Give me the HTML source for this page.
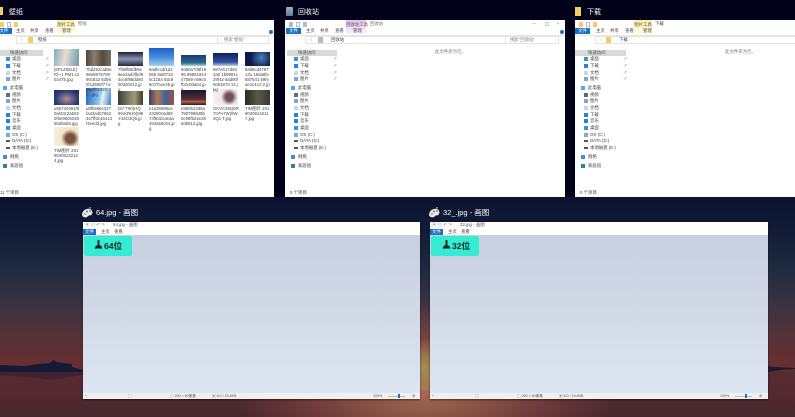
<!DOCTYPE html>
<html><head><meta charset="utf-8"><style>
html,body{margin:0;padding:0}
body{width:795px;height:417px;overflow:hidden;position:relative;font-family:"Liberation Sans","Noto Sans CJK SC",sans-serif;background:#02031a}
div,span{position:absolute;white-space:nowrap}
#r{left:0;top:0;width:795px;height:417px;overflow:hidden;filter:blur(.3px)}
#bg{left:0;top:197px;width:795px;height:220px;background:linear-gradient(#0a1430 0,#121c38 35px,#1f2a3f 70px,#383340 105px,#523238 135px,#6a2f32 170px,#562b30 176px,#54292f 195px,#48282f 220px)}
#g1{left:120px;top:290px;width:620px;height:127px;background:radial-gradient(ellipse 190px 90px at 305px 100px,rgba(180,120,85,.85),rgba(150,80,70,.5) 60%,rgba(120,50,50,0) 100%)}
#g2{left:410px;top:330px;width:30px;height:60px;background:radial-gradient(ellipse 14px 30px at 15px 38px,rgba(170,170,90,.7),rgba(170,170,90,0))}
.lbl{color:#fff;font-size:7px;line-height:9px;top:8px}
.w{top:20px;height:177px;background:#fff;overflow:hidden}
.t{font-size:4.4px;line-height:6px;color:#444}
.ctx{top:0;height:14px;width:18px;font-size:4.4px;line-height:9px;text-align:center;color:#555}
.file{top:8px;left:0;height:6px;background:#1a70c0;color:#fff;font-size:4.4px;line-height:6px;text-align:center}
.bar{left:0;right:0;top:15px;height:1px;background:#e6e6e6}
.addr{top:16px;height:6px;border:1px solid #e4e4e4}
.ri{width:4px;height:4px}
.q{left:0;top:30px;height:6px;background:#d9d9d9}
.sb{left:0;top:0;width:60px;height:177px}
.sb div.t{left:14px}
.pin{font-size:4px;line-height:6px;color:#777}
.e{font-size:4.4px;line-height:6px;color:#777}
.th{width:25px}
.c{width:26px;font-size:4.3px;line-height:5px;color:#444;white-space:normal;word-break:break-all}
.pw{top:222px;height:177px;background:#fff;overflow:hidden;box-shadow:0 1px 2px rgba(0,0,0,.5)}
.cv{left:0;right:0;top:13px;height:158px;background:linear-gradient(#c8d0df,#d4dcea 60%,#dce5f1)}
.st{left:0;right:0;top:171px;height:6px;background:#f0f0f0;font-size:3.6px;line-height:6px;color:#555}
.cy{left:1px;top:14px;width:48px;height:20px;background:#35ecd2;border-radius:2px}
.big{font-size:8.6px;font-weight:bold;color:#0a2a2a;line-height:11px;top:4px}
.pal{top:207px}
</style></head><body><div id="r">
<div id="bg"></div><div id="g1"></div><div id="g2"></div>
<svg style="position:absolute;left:0;top:355px" width="795" height="30"><path d="M0 10L25 11L32 10L38 9L50 8L53 5L57 7L62 8L72 9V12L83 15V17H0Z" fill="#151a35"/><path d="M0 17H83V20L50 25L38 23L0 20Z" fill="#3a2030" opacity=".7"/><path d="M768 11L775 12L795 13V14L780 15L768 17Z" fill="#1b1c33"/></svg>

<div style="left:0;top:7px;width:3px;height:8px;background:#f1cd63"></div>
<div class="lbl" style="left:9px">壁纸</div>
<div style="left:286px;top:7px;width:7px;height:9px;background:linear-gradient(#9fb3c4,#5d7e9a);border-radius:1px"></div>
<div class="lbl" style="left:298px">回收站</div>
<div style="left:575px;top:7px;width:6px;height:9px;background:#f1cd63"></div>
<div class="lbl" style="left:587px">下载</div>

<!-- window 1 -->
<div class="w" style="left:-4px;width:278px">
 <div style="left:4px;top:2px;width:4px;height:5px;background:#f1cd63"></div><div style="left:11px;top:2px;width:4px;height:5px;border:1px solid #bbb;box-sizing:border-box"></div><div style="left:18px;top:2px;width:4px;height:5px;background:#f1cd63"></div>
 <div class="ctx" style="left:61px;background:linear-gradient(#fdf0a0,#fffbe6);width:18px">图片工具</div>
 <div class="t" style="left:82px;top:1px;color:#777">壁纸</div>
 <div class="file" style="left:0;width:16px">文件</div>
 <div class="t" style="left:20px;top:8px">主页</div><div class="t" style="left:34px;top:8px">共享</div><div class="t" style="left:49px;top:8px">查看</div><div class="t" style="left:66px;top:8px">管理</div>
 <div class="bar"></div>
 <div class="t" style="left:24px;top:17px;color:#777">↑</div><div style="left:32px;top:17px;width:5px;height:6px;background:#f1cd63"></div><div class="t" style="left:42px;top:17px">壁纸</div>
 <div class="addr" style="left:20px;width:218px"></div><div class="addr" style="left:221px;width:50px"></div>
 <div class="t" style="left:228px;top:17px;color:#888">搜索"壁纸"</div>
 <div style="left:273px;top:10px;width:4px;height:4px;border-radius:50%;background:#1a70c0"></div>
 <div class="q" style="width:47px"></div>
 <div class="sb">
 <div class="t" style="top:30px">快速访问</div><div class="t" style="left:16px;top:36px">桌面</div><div class="t" style="left:16px;top:43px">下载</div><div class="t" style="left:16px;top:50px">文档</div><div class="t" style="left:16px;top:56px">图片</div>
 <div class="t" style="top:65px">此电脑</div><div class="t" style="left:16px;top:72px">视频</div><div class="t" style="left:16px;top:78px">图片</div><div class="t" style="left:16px;top:85px">文档</div><div class="t" style="left:16px;top:92px">下载</div><div class="t" style="left:16px;top:98px">音乐</div><div class="t" style="left:16px;top:105px">桌面</div><div class="t" style="left:16px;top:112px">OS (C:)</div><div class="t" style="left:16px;top:118px">DATA (D:)</div><div class="t" style="left:16px;top:125px">本地磁盘 (E:)</div>
 <div class="t" style="top:134px">网络</div><div class="t" style="top:143px">家庭组</div>
 <div class="ri" style="left:10px;top:37px;background:#2f9ad8"></div><div class="ri" style="left:10px;top:44px;background:#2f7fd8"></div><div class="ri" style="left:10px;top:51px;background:#c9d6e4"></div><div class="ri" style="left:10px;top:57px;background:#7aa8d0"></div>
 <div class="ri" style="left:7px;top:66px;background:#55a9e0"></div><div class="ri" style="left:10px;top:73px;background:#606a78"></div><div class="ri" style="left:10px;top:79px;background:#7aa8d0"></div><div class="ri" style="left:10px;top:86px;background:#c9d6e4"></div><div class="ri" style="left:10px;top:93px;background:#2f7fd8"></div><div class="ri" style="left:10px;top:99px;background:#2f7fd8"></div><div class="ri" style="left:10px;top:106px;background:#2f9ad8"></div><div class="ri" style="left:10px;top:113px;background:#8aa"></div><div class="ri" style="left:10px;top:120px;height:2px;background:#555"></div><div class="ri" style="left:10px;top:127px;height:2px;background:#555"></div><div class="ri" style="left:7px;top:135px;background:#3f8fd0"></div><div class="ri" style="left:7px;top:144px;background:#2a8a8a"></div>
 <div class="pin" style="left:49px;top:36px">↗</div><div class="pin" style="left:49px;top:43px">↗</div><div class="pin" style="left:49px;top:50px">↗</div><div class="pin" style="left:49px;top:56px">↗</div>
 </div>
 <div class="t" style="left:4px;top:170px">11 个项目</div>
</div>
<!-- thumbs -->
<div class="th" style="left:54px;top:49px;height:17px;background:linear-gradient(100deg,#7fb0b8,#e8dcd8 45%,#6a9aa8)"></div>
<div class="th" style="left:86px;top:50px;height:16px;background:linear-gradient(90deg,#4d4438,#8a7e6c,#544a40,#7a7060)"></div>
<div class="th" style="left:118px;top:52px;height:14px;background:linear-gradient(#1a2038,#8a96b0 50%,#20283f)"></div>
<div class="th" style="left:149px;top:48px;height:18px;background:linear-gradient(#1d5fc8,#4a92e0 55%,#a8d0f0)"></div>
<div class="th" style="left:181px;top:55px;height:11px;background:linear-gradient(#1a3a70,#2a6a90 70%,#a8d8d0)"></div>
<div class="th" style="left:213px;top:53px;height:13px;background:linear-gradient(#0e1e5a,#3050a0 70%,#c0d0e0)"></div>
<div class="th" style="left:245px;top:52px;height:14px;background:radial-gradient(circle at 65% 40%,#4a80c0,#0c1a4a 60%)"></div>
<div class="th" style="left:54px;top:90px;height:15px;background:radial-gradient(ellipse at 50% 60%,#b89090,#30407a 60%,#1a2450)"></div>
<div class="th" style="left:86px;top:88px;height:17px;background:linear-gradient(100deg,#2060c0,#90c8f0 55%,#e8f2f8 65%,#3a80c8)"></div>
<div class="th" style="left:118px;top:91px;height:14px;background:linear-gradient(90deg,#3a3a30,#707060,#a09a78,#3c3c34)"></div>
<div class="th" style="left:149px;top:90px;height:15px;background:linear-gradient(90deg,#30407a,#b07a50,#4060a0,#a05040)"></div>
<div class="th" style="left:181px;top:90px;height:15px;background:linear-gradient(#12182f,#5a3038 65%,#c06040 75%,#2a1c2a)"></div>
<div class="th" style="left:213px;top:89px;height:16px;background:radial-gradient(circle at 65% 50%,#6a5060 20%,#f0e6e6 45%,#f6f4f4)"></div>
<div class="th" style="left:245px;top:90px;height:15px;background:linear-gradient(90deg,#2a2a22,#5a5a48,#3a3830)"></div>
<div class="th" style="left:54px;top:127px;height:19px;background:radial-gradient(circle at 65% 60%,#7a5040 22%,#f3e4c8 45%,#f6f2ea)"></div>
<div class="c" style="left:54px;top:67px">{6PLZ59LE}R}~1 PM1.1202475.jpg</div>
<div class="c" style="left:86px;top:67px">7bd292cab9c98e897870890c822 5d980f1d590f7 hzpxjdf01020e...jpg</div>
<div class="c" style="left:118px;top:67px">7fb9fb8db9e9ee2ad4fbd94ec8f95dd9000330012.jpg</div>
<div class="c" style="left:149px;top:67px">9adfecdf1d2555 8a5f7330c1184 93c98c07bce25.jpg</div>
<div class="c" style="left:181px;top:67px">9a60a708f1996 8985194447569 e59c5fb2c0da54.jpg</div>
<div class="c" style="left:213px;top:67px">587e617d932a0 1b9991c29f42 6ad90f50b1870 13.jpg</div>
<div class="c" style="left:245px;top:67px">84d6cd4787131 15da8fe587541 59feae1e1c3 2.jpg</div>
<div class="c" style="left:54px;top:106px">u85720491f90af43c2a5620f5e95c504855d0a69.jpg</div>
<div class="c" style="left:86px;top:106px">u8fb566c027fa43a4b7562347ffdc45413f4eed3.jpg</div>
<div class="c" style="left:118px;top:106px">DV`T90{HQ9%KRH0(M9Y44O3Q5.jpg</div>
<div class="c" style="left:149px;top:106px">e1a39980ee43280c6d5974f832cdeaa453a59cb4.jpg</div>
<div class="c" style="left:181px;top:106px">e960523d5a790798948b0c95f521e285d6812.jpg</div>
<div class="c" style="left:213px;top:106px">GKVC35Q6R7IV%7W)8W3Q1 T.jpg</div>
<div class="c" style="left:245px;top:106px">TIM图片 20190408142117.jpg</div>
<div class="c" style="left:54px;top:148px">TIM图片 20190408132124.jpg</div>

<!-- window 2 -->
<div class="w" style="left:285px;width:280px">
 <div style="left:4px;top:2px;width:4px;height:5px;background:#a9bfd4"></div><div style="left:11px;top:2px;width:4px;height:5px;border:1px solid #bbb;box-sizing:border-box"></div><div style="left:18px;top:2px;width:4px;height:5px;background:#a9bfd4"></div>
 <div class="ctx" style="left:61px;background:linear-gradient(#e6bff0,#fbf2fd);width:20px">回收站工具</div>
 <div class="t" style="left:85px;top:1px;color:#777">回收站</div>
 <div class="t" style="left:247px;top:1px;color:#888">—</div><div style="left:260px;top:2px;width:4px;height:4px;border:1px solid #ccc;box-sizing:border-box"></div><div class="t" style="left:272px;top:1px;color:#888">×</div>
 <div class="file" style="left:1px;width:15px">文件</div>
 <div class="t" style="left:21px;top:8px">主页</div><div class="t" style="left:35px;top:8px">共享</div><div class="t" style="left:50px;top:8px">查看</div><div class="t" style="left:68px;top:8px">管理</div>
 <div class="bar"></div>
 <div class="t" style="left:25px;top:17px;color:#777">↑</div><div style="left:33px;top:17px;width:5px;height:6px;background:#a9bfd4"></div><div class="t" style="left:46px;top:17px">回收站</div>
 <div class="addr" style="left:20px;width:208px"></div><div class="addr" style="left:220px;width:52px"></div>
 <div class="t" style="left:225px;top:17px;color:#888">搜索"回收站"</div>
 <div style="left:275px;top:10px;width:4px;height:4px;border-radius:50%;background:#1a70c0"></div>
 <div class="q" style="left:2px;width:50px"></div>
 <div class="sb" style="left:5px">
 <div class="t" style="left:8px;top:30px">快速访问</div><div class="t" style="left:10px;top:36px">桌面</div><div class="t" style="left:10px;top:43px">下载</div><div class="t" style="left:10px;top:50px">文档</div><div class="t" style="left:10px;top:56px">图片</div>
 <div class="t" style="left:8px;top:65px">此电脑</div><div class="t" style="left:10px;top:72px">视频</div><div class="t" style="left:10px;top:78px">图片</div><div class="t" style="left:10px;top:85px">文档</div><div class="t" style="left:10px;top:92px">下载</div><div class="t" style="left:10px;top:98px">音乐</div><div class="t" style="left:10px;top:105px">桌面</div><div class="t" style="left:10px;top:112px">OS (C:)</div><div class="t" style="left:10px;top:118px">DATA (D:)</div><div class="t" style="left:10px;top:125px">本地磁盘 (E:)</div>
 <div class="t" style="left:8px;top:134px">网络</div><div class="t" style="left:8px;top:143px">家庭组</div>
 <div class="ri" style="left:4px;top:37px;background:#2f9ad8"></div><div class="ri" style="left:4px;top:44px;background:#2f7fd8"></div><div class="ri" style="left:4px;top:51px;background:#c9d6e4"></div><div class="ri" style="left:4px;top:57px;background:#7aa8d0"></div>
 <div class="ri" style="left:1px;top:66px;background:#55a9e0"></div><div class="ri" style="left:4px;top:73px;background:#606a78"></div><div class="ri" style="left:4px;top:79px;background:#7aa8d0"></div><div class="ri" style="left:4px;top:86px;background:#c9d6e4"></div><div class="ri" style="left:4px;top:93px;background:#2f7fd8"></div><div class="ri" style="left:4px;top:99px;background:#2f7fd8"></div><div class="ri" style="left:4px;top:106px;background:#2f9ad8"></div><div class="ri" style="left:4px;top:113px;background:#8aa"></div><div class="ri" style="left:4px;top:120px;height:2px;background:#555"></div><div class="ri" style="left:4px;top:127px;height:2px;background:#555"></div><div class="ri" style="left:1px;top:135px;background:#3f8fd0"></div><div class="ri" style="left:1px;top:144px;background:#2a8a8a"></div>
 <div class="pin" style="left:43px;top:36px">↗</div><div class="pin" style="left:43px;top:43px">↗</div><div class="pin" style="left:43px;top:50px">↗</div><div class="pin" style="left:43px;top:56px">↗</div>
 </div>
 <div class="e" style="left:150px;top:29px">此文件夹为空。</div>
 <div class="t" style="left:5px;top:170px">0 个项目</div>
</div>

<!-- window 3 -->
<div class="w" style="left:575px;width:220px">
 <div style="left:4px;top:2px;width:4px;height:5px;background:#f1cd63"></div><div style="left:11px;top:2px;width:4px;height:5px;border:1px solid #bbb;box-sizing:border-box"></div><div style="left:18px;top:2px;width:4px;height:5px;background:#f1cd63"></div>
 <div class="ctx" style="left:59px;background:linear-gradient(#fdf0a0,#fffbe6);width:18px">图片工具</div>
 <div class="t" style="left:80px;top:1px">下载</div>
 <div class="file" style="left:0;width:15px">文件</div>
 <div class="t" style="left:21px;top:8px">主页</div><div class="t" style="left:35px;top:8px">共享</div><div class="t" style="left:50px;top:8px">查看</div><div class="t" style="left:68px;top:8px">管理</div>
 <div class="bar"></div>
 <div class="t" style="left:25px;top:17px;color:#777">↑</div><div style="left:31px;top:17px;width:5px;height:6px;background:#f1cd63"></div><div class="t" style="left:44px;top:17px">下载</div>
 <div class="addr" style="left:20px;width:208px"></div>
 <div class="q" style="left:0;width:51px"></div>
 <div class="sb" style="left:5px">
 <div class="t" style="left:8px;top:30px">快速访问</div><div class="t" style="left:10px;top:36px">桌面</div><div class="t" style="left:10px;top:43px">下载</div><div class="t" style="left:10px;top:50px">文档</div><div class="t" style="left:10px;top:56px">图片</div>
 <div class="t" style="left:8px;top:65px">此电脑</div><div class="t" style="left:10px;top:72px">视频</div><div class="t" style="left:10px;top:78px">图片</div><div class="t" style="left:10px;top:85px">文档</div><div class="t" style="left:10px;top:92px">下载</div><div class="t" style="left:10px;top:98px">音乐</div><div class="t" style="left:10px;top:105px">桌面</div><div class="t" style="left:10px;top:112px">OS (C:)</div><div class="t" style="left:10px;top:118px">DATA (D:)</div><div class="t" style="left:10px;top:125px">本地磁盘 (E:)</div>
 <div class="t" style="left:8px;top:134px">网络</div><div class="t" style="left:8px;top:143px">家庭组</div>
 <div class="ri" style="left:4px;top:37px;background:#2f9ad8"></div><div class="ri" style="left:4px;top:44px;background:#2f7fd8"></div><div class="ri" style="left:4px;top:51px;background:#c9d6e4"></div><div class="ri" style="left:4px;top:57px;background:#7aa8d0"></div>
 <div class="ri" style="left:1px;top:66px;background:#55a9e0"></div><div class="ri" style="left:4px;top:73px;background:#606a78"></div><div class="ri" style="left:4px;top:79px;background:#7aa8d0"></div><div class="ri" style="left:4px;top:86px;background:#c9d6e4"></div><div class="ri" style="left:4px;top:93px;background:#2f7fd8"></div><div class="ri" style="left:4px;top:99px;background:#2f7fd8"></div><div class="ri" style="left:4px;top:106px;background:#2f9ad8"></div><div class="ri" style="left:4px;top:113px;background:#8aa"></div><div class="ri" style="left:4px;top:120px;height:2px;background:#555"></div><div class="ri" style="left:4px;top:127px;height:2px;background:#555"></div><div class="ri" style="left:1px;top:135px;background:#3f8fd0"></div><div class="ri" style="left:1px;top:144px;background:#2a8a8a"></div>
 <div class="pin" style="left:43px;top:36px">↗</div><div class="pin" style="left:43px;top:43px">↗</div><div class="pin" style="left:43px;top:50px">↗</div><div class="pin" style="left:43px;top:56px">↗</div>
 </div>
 <div class="e" style="left:150px;top:29px">此文件夹为空。</div>
 <div class="t" style="left:5px;top:170px">0 个项目</div>
</div>

<!-- paint A -->
<svg class="pal" style="position:absolute;left:81px" width="12" height="12"><path d="M1 8C1 4 5 1 9 2c2 .5 3 3 2 5-1 2-3 1-4 2-1 2-5 2-6-1z" fill="#e8e8e8"/><circle cx="4" cy="7" r="1" fill="#d84"/><circle cx="6" cy="4.500" r="1" fill="#48c"/><circle cx="9" cy="4" r="1" fill="#5a5"/><path d="M8 0l2 0-1 3z" fill="#a86"/></svg>
<div class="lbl" style="left:96px;top:208px;font-size:7.5px">64.jpg - 画图</div>
<div class="pw" style="left:83px;width:337px">
 <div class="t" style="left:30px;top:0;color:#555">64.jpg - 画图</div>
 <div class="t" style="left:2px;top:0;color:#888">▣ ▤ ↶ ↷</div>
 <div class="file" style="top:7px;width:13px">文件</div>
 <div class="t" style="left:18px;top:7px">主页</div><div class="t" style="left:31px;top:7px">查看</div>
 <div class="cv"></div>
 <div class="cy"></div>
 <div class="big" style="left:21px;top:19px">64位</div>
 <svg style="position:absolute;left:11px;top:17px" width="9" height="11"><path d="M3.600 1h1.800v6H3.600zM2 6.500h5l1.500 3H.5z" fill="#0a1a22"/></svg>
 <div class="st"><span style="left:2px">+</span><span style="left:45px">▢</span><span style="left:87px">▢ 200 × 60像素</span><span style="left:129px">▣ 8.0 / 15.6KB</span><span style="left:290px">100%</span><span style="left:305px;top:3px;width:17px;height:1px;background:#bbb"></span><span style="left:315px;top:1px;width:2px;height:4px;background:#1a70c0"></span><span style="left:329px">⊕</span></div>
</div>
<!-- paint B -->
<svg class="pal" style="position:absolute;left:428px" width="12" height="12"><path d="M1 8C1 4 5 1 9 2c2 .5 3 3 2 5-1 2-3 1-4 2-1 2-5 2-6-1z" fill="#e8e8e8"/><circle cx="4" cy="7" r="1" fill="#d84"/><circle cx="6" cy="4.500" r="1" fill="#48c"/><circle cx="9" cy="4" r="1" fill="#5a5"/><path d="M8 0l2 0-1 3z" fill="#a86"/></svg>
<div class="lbl" style="left:443px;top:208px;font-size:7.5px">32_.jpg - 画图</div>
<div class="pw" style="left:430px;width:338px">
 <div class="t" style="left:30px;top:0;color:#555">32.jpg - 画图</div>
 <div class="t" style="left:2px;top:0;color:#888">▣ ▤ ↶ ↷</div>
 <div class="file" style="top:7px;width:13px">文件</div>
 <div class="t" style="left:18px;top:7px">主页</div><div class="t" style="left:31px;top:7px">查看</div>
 <div class="cv"></div>
 <div class="cy"></div>
 <div class="big" style="left:22px;top:19px">32位</div>
 <svg style="position:absolute;left:12px;top:17px" width="9" height="11"><path d="M3.600 1h1.800v6H3.600zM2 6.500h5l1.500 3H.5z" fill="#0a1a22"/></svg>
 <div class="st"><span style="left:2px">+</span><span style="left:45px">▢</span><span style="left:87px">▢ 200 × 60像素</span><span style="left:129px">▣ 8.0 / 15.6KB</span><span style="left:290px">100%</span><span style="left:305px;top:3px;width:17px;height:1px;background:#bbb"></span><span style="left:315px;top:1px;width:2px;height:4px;background:#1a70c0"></span><span style="left:329px">⊕</span></div>
</div>
</div></body></html>
